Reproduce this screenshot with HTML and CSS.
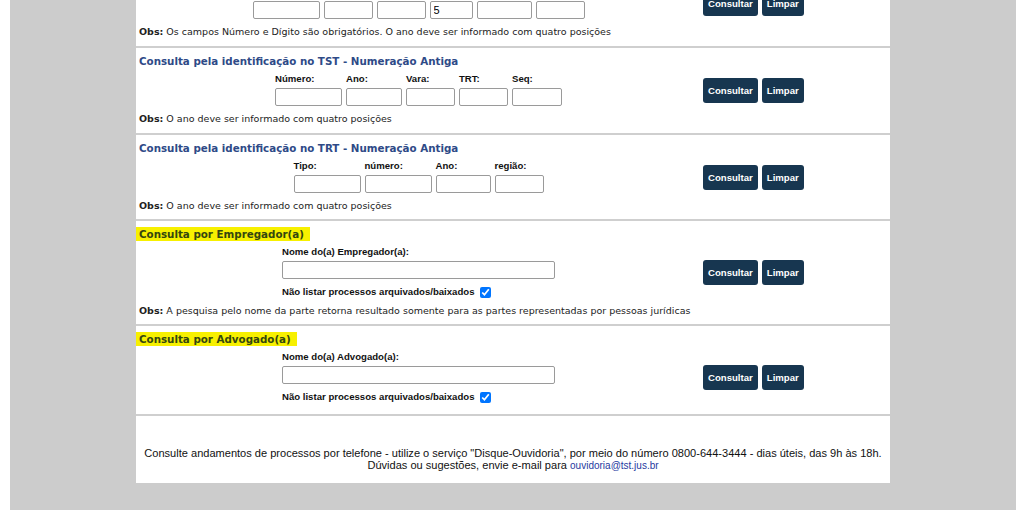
FILE: index.html
```html
<!DOCTYPE html>
<html lang="pt-BR">
  <head>
    <meta charset="UTF-8" />
    <meta name="viewport" content="width=device-width, initial-scale=1.0" />
    <title>Consulta Processual</title>
    <link rel="stylesheet" href="styles.css">
  </head>
  <body>
    <div class="page">
      <div class="panel">

        <div class="sec">
          <div class="left">
            <div class="title">Consulta pela identificação no TST - Numeração Única</div>
            <div class="fields">
              <div class="field"><label>Número:</label><input class="w67" type="text"></div>
              <div class="field"><label>Dígito:</label><input class="w49" type="text"></div>
              <div class="field"><label>Ano:</label><input class="w49" type="text"></div>
              <div class="field"><label>Órgão:</label><input class="w43" type="text" value="5"></div>
              <div class="field"><label>Tribunal:</label><input class="w55" type="text"></div>
              <div class="field"><label>Vara:</label><input class="w49" type="text"></div>
            </div>
            <div class="obs"><b>Obs:</b> Os campos Número e Dígito são obrigatórios. O ano deve ser informado com quatro posições</div>
          </div>
          <div class="right">
            <button class="btn">Consultar</button>
            <button class="btn">Limpar</button>
          </div>
        </div>

        <div class="sec">
          <div class="left">
            <div class="title">Consulta pela identificação no TST - Numeração Antiga</div>
            <div class="fields">
              <div class="field"><label>Número:</label><input class="w67" type="text"></div>
              <div class="field"><label>Ano:</label><input class="w56" type="text"></div>
              <div class="field"><label>Vara:</label><input class="w49" type="text"></div>
              <div class="field"><label>TRT:</label><input class="w49" type="text"></div>
              <div class="field"><label>Seq:</label><input class="w50" type="text"></div>
            </div>
            <div class="obs"><b>Obs:</b> O ano deve ser informado com quatro posições</div>
          </div>
          <div class="right">
            <button class="btn">Consultar</button>
            <button class="btn">Limpar</button>
          </div>
        </div>

        <div class="sec short">
          <div class="left">
            <div class="title">Consulta pela identificação no TRT - Numeração Antiga</div>
            <div class="fields">
              <div class="field"><label>Tipo:</label><input class="w67" type="text"></div>
              <div class="field"><label>número:</label><input class="w67" type="text"></div>
              <div class="field"><label>Ano:</label><input class="w55" type="text"></div>
              <div class="field"><label>região:</label><input class="w49" type="text"></div>
            </div>
            <div class="obs"><b>Obs:</b> O ano deve ser informado com quatro posições</div>
          </div>
          <div class="right">
            <button class="btn">Consultar</button>
            <button class="btn">Limpar</button>
          </div>
        </div>

        <div class="sec short">
          <div class="left">
            <div class="title"><span class="mark">Consulta por Empregador(a)</span></div>
            <div class="wide">
              <label>Nome do(a) Empregador(a):</label>
              <input type="text">
              <div class="check">Não listar processos arquivados/baixados <input type="checkbox" checked></div>
            </div>
            <div class="obs"><b>Obs:</b> A pesquisa pelo nome da parte retorna resultado somente para as partes representadas por pessoas jurídicas</div>
          </div>
          <div class="right">
            <button class="btn">Consultar</button>
            <button class="btn">Limpar</button>
          </div>
        </div>

        <div class="sec last">
          <div class="left">
            <div class="title"><span class="mark">Consulta por Advogado(a)</span></div>
            <div class="wide">
              <label>Nome do(a) Advogado(a):</label>
              <input type="text">
              <div class="check">Não listar processos arquivados/baixados <input type="checkbox" checked></div>
            </div>
          </div>
          <div class="right">
            <button class="btn">Consultar</button>
            <button class="btn">Limpar</button>
          </div>
        </div>

        <div class="footer">
          Consulte andamentos de processos por telefone - utilize o serviço "Disque-Ouvidoria", por meio do número 0800-644-3444 - dias úteis, das 9h às 18h.<br>
          Dúvidas ou sugestões, envie e-mail para <a href="#">ouvidoria@tst.jus.br</a>
        </div>

      </div>
    </div>
  </body>
</html>
```

FILE: styles.css
```css
html, body {
  margin: 0;
  padding: 0;
  background: #fff;
}
.page {
  margin: 0 8px 0 10px;
  background: #cccccc;
  min-height: 510px;
  overflow: hidden;
}
.panel {
  width: 754px;
  margin: -39px auto 0;
  background: #fff;
}
.sec {
  display: flex;
  border-bottom: 2px solid #cfcfcf;
}
.left {
  width: 559px;
  padding: 5px 3px 7px;
}
.sec.short .left {
  padding-bottom: 6px;
}
.sec.last .left {
  padding-bottom: 10px;
}
.right {
  flex: 1;
  display: flex;
  align-items: center;
  gap: 4px;
  padding-left: 2px;
}
.sec.last .right {
  padding-top: 15px;
}
.title {
  font-family: "DejaVu Sans", Verdana, sans-serif;
  font-weight: bold;
  font-size: 10.3px;
  line-height: 17px;
  color: #2e4a87;
  margin-bottom: 2px;
}
.mark {
  background: #f7f000;
  color: #34460f;
  margin-left: -3px;
  padding: 1px 6px 1px 3px;
}
.fields {
  display: flex;
  justify-content: center;
  gap: 4px;
}
.field {
  display: flex;
  flex-direction: column;
}
label, .check {
  font-family: "Liberation Sans", Arial, sans-serif;
  font-weight: bold;
  font-size: 9.6px;
  line-height: 14px;
  color: #111;
}
input[type="text"] {
  box-sizing: border-box;
  height: 18px;
  margin: 2px 0 0;
  padding: 0 3px;
  border: 1px solid #9a9a9a;
  border-radius: 2px;
  font-family: "Liberation Sans", Arial, sans-serif;
  font-size: 11px;
  color: #000;
}
.w67 { width: 67px; }
.w56 { width: 56px; }
.w55 { width: 55px; }
.w50 { width: 50px; }
.w49 { width: 49px; }
.w43 { width: 43px; }
.obs {
  margin-top: 6px;
  font-family: "DejaVu Sans", Verdana, sans-serif;
  font-size: 9.5px;
  line-height: 14px;
  color: #222;
}
.wide {
  width: 273px;
  margin: 0 auto;
}
.wide label {
  display: block;
}
.wide input[type="text"] {
  width: 273px;
  display: block;
}
.check {
  margin-top: 6px;
  display: flex;
  align-items: center;
}
.check input {
  width: 11px;
  height: 11px;
  margin: 0 0 0 6px;
}
.wide + .obs {
  margin-top: 5px;
}
.btn {
  height: 25px;
  padding: 0 5px;
  border: none;
  border-radius: 3px;
  background: #173650;
  color: #fff;
  font-family: "Liberation Sans", Arial, sans-serif;
  font-weight: bold;
  font-size: 9.6px;
}
.footer {
  padding: 31px 0 11px;
  text-align: center;
  font-family: "Liberation Sans", Arial, sans-serif;
  font-size: 11.05px;
  line-height: 12px;
  color: #111;
}
.footer a {
  color: #1f3aa0;
  text-decoration: none;
  font-size: 10px;
}
```
